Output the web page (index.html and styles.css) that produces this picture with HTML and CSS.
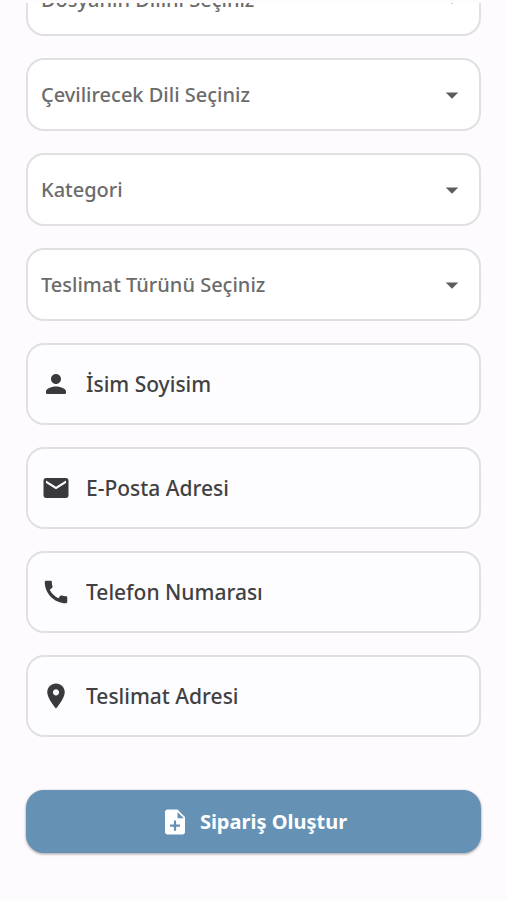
FILE: index.html
```
<!DOCTYPE html>
<html lang="tr">
<head>
    <meta charset="UTF-8">
    <meta name="viewport" content="width=device-width, initial-scale=1.0">
    <title>Sipariş Oluştur</title>
    <link rel="stylesheet" href="styles.css">
</head>

<body>
    <main class="page">
      <form class="order-form" id="orderForm">
        <label class="select-box">
          <select name="sourceLang" aria-label="Dosyanın Dilini Seçiniz">
            <option>Dosyanın Dilini Seçiniz</option>
          </select>
          <svg class="arrow" viewBox="0 0 24 24"><path d="M7 10l5 5 5-5z"/></svg>
        </label>
        <label class="select-box">
          <select name="targetLang" aria-label="Çevilirecek Dili Seçiniz">
            <option>Çevilirecek Dili Seçiniz</option>
          </select>
          <svg class="arrow" viewBox="0 0 24 24"><path d="M7 10l5 5 5-5z"/></svg>
        </label>
        <label class="select-box">
          <select name="category" aria-label="Kategori">
            <option>Kategori</option>
          </select>
          <svg class="arrow" viewBox="0 0 24 24"><path d="M7 10l5 5 5-5z"/></svg>
        </label>
        <label class="select-box">
          <select name="delivery" aria-label="Teslimat Türünü Seçiniz">
            <option>Teslimat Türünü Seçiniz</option>
          </select>
          <svg class="arrow" viewBox="0 0 24 24"><path d="M7 10l5 5 5-5z"/></svg>
        </label>

        <label class="input-box">
          <svg class="icon" viewBox="0 0 24 24"><path d="M12 12c2.21 0 4-1.79 4-4s-1.79-4-4-4-4 1.79-4 4 1.79 4 4 4zm0 2c-2.67 0-8 1.34-8 4v1c0 .55.45 1 1 1h14c.55 0 1-.45 1-1v-1c0-2.66-5.33-4-8-4z"/></svg>
          <input type="text" name="fullname" placeholder="İsim Soyisim" aria-label="İsim Soyisim">
        </label>
        <label class="input-box">
          <svg class="icon" viewBox="0 0 24 24"><path d="M20 4H4c-1.1 0-1.99.9-1.99 2L2 18c0 1.1.9 2 2 2h16c1.1 0 2-.9 2-2V6c0-1.1-.9-2-2-2zm0 4l-8 5-8-5V6l8 5 8-5v2z"/></svg>
          <input type="email" name="email" placeholder="E-Posta Adresi" aria-label="E-Posta Adresi">
        </label>
        <label class="input-box">
          <svg class="icon" viewBox="0 0 24 24"><path d="M20.01 15.38c-1.23 0-2.42-.2-3.53-.56-.35-.12-.74-.03-1.01.24l-1.57 1.97c-2.83-1.35-5.48-3.9-6.89-6.83l1.95-1.66c.27-.28.35-.67.24-1.02-.37-1.11-.56-2.3-.56-3.53 0-.54-.45-.99-.99-.99H4.19C3.65 3 3 3.24 3 3.99 3 13.28 10.73 21 20.01 21c.71 0 .99-.63.99-1.18v-3.45c0-.54-.45-.99-.99-.99z"/></svg>
          <input type="tel" name="phone" placeholder="Telefon Numarası" aria-label="Telefon Numarası">
        </label>
        <label class="input-box">
          <svg class="icon" viewBox="0 0 24 24"><path d="M12 2C8.13 2 5 5.13 5 9c0 5.25 7 13 7 13s7-7.75 7-13c0-3.87-3.13-7-7-7zm0 9.5c-1.38 0-2.5-1.12-2.5-2.5s1.12-2.5 2.5-2.5 2.5 1.12 2.5 2.5-1.12 2.5-2.5 2.5z"/></svg>
          <input type="text" name="address" placeholder="Teslimat Adresi" aria-label="Teslimat Adresi">
        </label>

        <button class="submit-btn" type="submit">
          <svg class="btn-icon" viewBox="0 0 24 24"><path d="M14 2H6c-1.1 0-2 .9-2 2v16c0 1.1.9 2 2 2h12c1.1 0 2-.9 2-2V8l-6-6zm2 13.8h-3.1V19h-1.8v-3.2H8V14h3.1v-3.2h1.8V14H16v1.8zM14 9V4l5 5h-5z"/></svg>
          Sipariş Oluştur
        </button>
      </form>
    </main>
</body>
</html>
```

FILE: styles.css
```
* {
  box-sizing: border-box;
}

body {
  margin: 0;
  padding-top: 3px;
  background-color: #fefbff;
  font-family: "Noto Sans", "Open Sans", sans-serif;
}

/* the form is scrolled up a little under the top edge */
.page {
  overflow: hidden;
}

.order-form {
  display: flex;
  flex-direction: column;
  gap: 22px;
  margin-top: -40px;
  padding: 0 26px 46px;
}

.select-box,
.input-box {
  border: 2px solid #e0dfe2;
  border-radius: 18px;
}

.select-box {
  display: grid;
  align-items: center;
  height: 73px;
  background-color: #ffffff;
}

.select-box select,
.arrow {
  grid-area: 1 / 1;
}

.select-box select {
  width: 100%;
  height: 100%;
  padding: 0 48px 0 13px;
  border: none;
  border-radius: 16px;
  outline: none;
  appearance: none;
  background: transparent;
  color: #6b6b6b;
  font-family: inherit;
  font-size: 20px;
  font-weight: 500;
}

.arrow {
  justify-self: end;
  width: 30px;
  height: 30px;
  margin-right: 12px;
  fill: #5c5c5c;
  pointer-events: none;
}

.input-box {
  display: flex;
  align-items: center;
  gap: 15px;
  height: 82px;
  padding: 0 13px;
  background-color: #fdfdff;
}

.icon {
  flex: none;
  width: 30px;
  height: 30px;
  fill: #3a3a3c;
}

.input-box input {
  flex: 1;
  min-width: 0;
  padding: 0;
  border: none;
  outline: none;
  background: transparent;
  color: #414143;
  font-family: inherit;
  font-size: 21px;
  font-weight: 500;
}

.input-box input::placeholder {
  color: #414143;
  opacity: 1;
}

.submit-btn {
  display: flex;
  align-items: center;
  justify-content: center;
  gap: 10px;
  height: 63px;
  margin-top: 31px;
  border: none;
  border-radius: 18px;
  background-color: #6591b5;
  box-shadow: 0 1px 3px rgba(0, 0, 0, 0.4);
  color: #ffffff;
  font-family: inherit;
  font-size: 20px;
  font-weight: 700;
  cursor: pointer;
}

.btn-icon {
  width: 30px;
  height: 30px;
  fill: #ffffff;
}
```
